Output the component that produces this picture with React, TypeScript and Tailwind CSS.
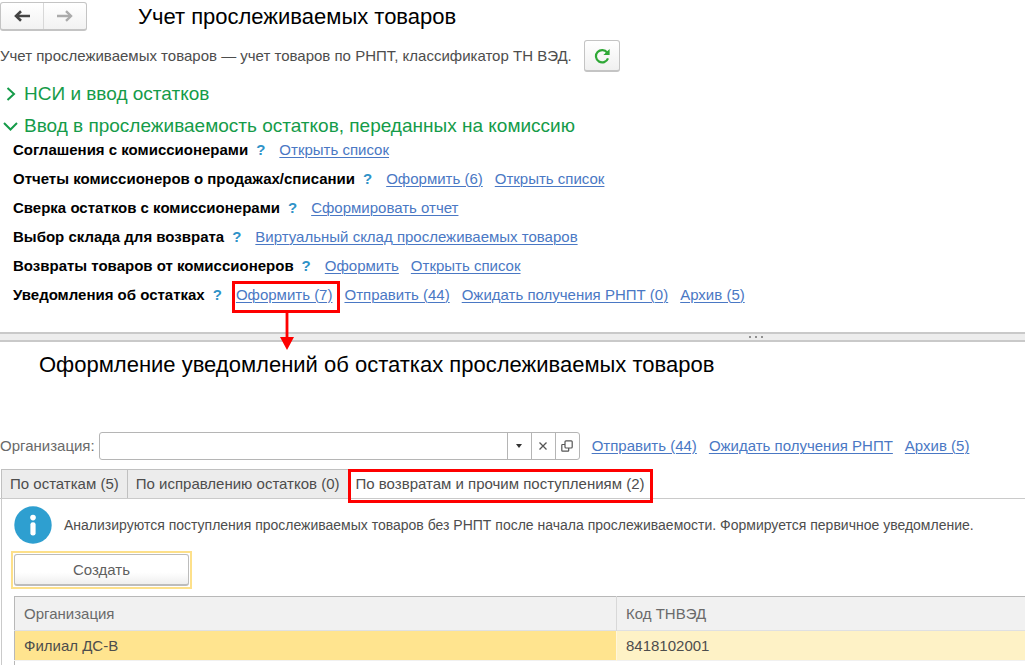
import { useState } from "react";

type LinkItem = { text: string; marked?: boolean };
type Row = { title: string; links: LinkItem[] };

const rows: Row[] = [
  { title: "Соглашения с комиссионерами", links: [{ text: "Открыть список" }] },
  {
    title: "Отчеты комиссионеров о продажах/списании",
    links: [{ text: "Оформить (6)" }, { text: "Открыть список" }],
  },
  { title: "Сверка остатков с комиссионерами", links: [{ text: "Сформировать отчет" }] },
  {
    title: "Выбор склада для возврата",
    links: [{ text: "Виртуальный склад прослеживаемых товаров" }],
  },
  {
    title: "Возвраты товаров от комиссионеров",
    links: [{ text: "Оформить" }, { text: "Открыть список" }],
  },
  {
    title: "Уведомления об остатках",
    links: [
      { text: "Оформить (7)", marked: true },
      { text: "Отправить (44)" },
      { text: "Ожидать получения РНПТ (0)" },
      { text: "Архив (5)" },
    ],
  },
];

const tabs = ["По остаткам (5)", "По исправлению остатков (0)", "По возвратам и прочим поступлениям (2)"];

function TextLink({ text }: { text: string }) {
  return (
    <a href="#" className="text-[#4a78c4] underline decoration-1 underline-offset-2">
      {text}
    </a>
  );
}

function MarkedLink({ text }: { text: string }) {
  return (
    <span className="relative">
      <TextLink text={text} />
      <span className="pointer-events-none absolute -left-1 -right-2 -top-1 h-8 border-3 border-[#fe0000]" />
      <svg className="pointer-events-none absolute left-11 top-7 h-[37px] w-3.5" viewBox="0 0 14 37" fill="#fe0000">
        <path d="M5.6 0h2.8v24H14L7 37 0 24h5.6z" />
      </svg>
    </span>
  );
}

function NavButtons() {
  return (
    <div className="flex h-[29px] w-[87px] overflow-hidden rounded-[3px] border border-b-2 border-[#c4c4c4] bg-linear-to-b from-white to-[#f2f2f2]">
      <button type="button" aria-label="Назад" className="flex flex-1 items-center justify-center border-r border-[#d8d8d8]">
        <svg className="h-3 w-4" viewBox="0 0 16 12" fill="none" stroke="#444" strokeWidth="2.6">
          <path d="M16 6H3" />
          <path d="M7 1.2 2 6l5 4.8" />
        </svg>
      </button>
      <button type="button" aria-label="Вперед" className="flex flex-1 items-center justify-center">
        <svg className="h-3 w-4" viewBox="0 0 16 12" fill="none" stroke="#ababab" strokeWidth="2.4">
          <path d="M0 6h13" />
          <path d="m9 1.2 5 4.8-5 4.8" />
        </svg>
      </button>
    </div>
  );
}

export default function App() {
  const [active, setActive] = useState(2);
  const [org, setOrg] = useState("");

  return (
    <div className="min-h-screen overflow-x-hidden bg-white pr-0.5 font-['Liberation_Sans',Arial,sans-serif] text-[15px] leading-5 text-[#4d4d4d]">
      <section>
        <header className="flex items-center gap-[51px] pt-0.5">
          <NavButtons />
          <h1 className="text-[22px] leading-7 text-black">Учет прослеживаемых товаров</h1>
        </header>

        <div className="flex items-center gap-3 pt-[9px]">
          <p>Учет прослеживаемых товаров — учет товаров по РНПТ, классификатор ТН ВЭД.</p>
          <button
            type="button"
            aria-label="Обновить"
            className="flex h-8 w-9 items-center justify-center rounded-[3px] border border-b-2 border-[#c4c4c4] bg-linear-to-b from-white to-[#f0f0f0]"
          >
            <svg className="h-4 w-4" viewBox="0 0 16 16" fill="none" stroke="#2fa836" strokeWidth="2.2">
              <path d="M13.2 4.6A6.2 6.2 0 1 0 14 10.4" />
              <path d="M15.6 1v6H9.4z" fill="#2fa836" stroke="none" />
            </svg>
          </button>
        </div>

        <h2 className="mt-1.5 text-[19px] leading-8 text-[#159b49]">
          <button type="button" className="flex items-center gap-1">
            <svg className="h-5 w-5" viewBox="0 0 20 20" fill="none" stroke="currentColor" strokeWidth="2">
              <path d="m7.5 4 6.5 6-6.5 6" />
            </svg>
            НСИ и ввод остатков
          </button>
        </h2>
        <h2 className="text-[19px] leading-8 text-[#159b49]">
          <button type="button" className="flex items-center gap-1">
            <svg className="h-5 w-5" viewBox="0 0 20 20" fill="none" stroke="currentColor" strokeWidth="2">
              <path d="m4 7 6.5 6.5L17 7" />
            </svg>
            Ввод в прослеживаемость остатков, переданных на комиссию
          </button>
        </h2>

        <ul className="-mt-[7px] pl-[13px]">
          {rows.map((row) => (
            <li key={row.title} className="flex h-[29px] items-center gap-3.5 whitespace-nowrap">
              <span className="flex gap-2">
                <span className="font-bold text-black">{row.title}</span>
                <button type="button" aria-label="Справка" className="font-bold text-[#2f93c8]">
                  ?
                </button>
              </span>
              <span className="flex gap-3">
                {row.links.map((link) =>
                  link.marked ? (
                    <MarkedLink key={link.text} text={link.text} />
                  ) : (
                    <TextLink key={link.text} text={link.text} />
                  ),
                )}
              </span>
            </li>
          ))}
        </ul>
      </section>

      <div className="mt-[23px] flex h-2.5 items-center justify-end border-y-2 border-[#c9c9c9] bg-[#ededed] pr-[25.6%]">
        <span className="flex gap-1">
          <i className="h-0.5 w-0.5 bg-[#909090]" />
          <i className="h-0.5 w-0.5 bg-[#909090]" />
          <i className="h-0.5 w-0.5 bg-[#909090]" />
        </span>
      </div>

      <section>
        <h1 className="pl-[39px] pt-[7px] text-[22px] leading-8 text-black">
          Оформление уведомлений об остатках прослеживаемых товаров
        </h1>

        <div className="mt-[51px] flex items-center whitespace-nowrap">
          <label htmlFor="org" className="pr-1 text-[#6a6a6a]">
            Организация:
          </label>
          <div className="flex h-7 w-[481px] rounded-[3px] border border-[#b5b5b5]">
            <input
              id="org"
              value={org}
              onChange={(e) => setOrg(e.target.value)}
              className="min-w-0 flex-1 px-2 outline-none"
            />
            <button type="button" aria-label="Выбрать" className="flex w-6 items-center justify-center border-l border-[#b5b5b5]">
              <svg className="h-1 w-1.5" viewBox="0 0 6 4" fill="#333">
                <path d="M0 0h6L3 4z" />
              </svg>
            </button>
            <button
              type="button"
              aria-label="Очистить"
              onClick={() => setOrg("")}
              className="flex w-6 items-center justify-center border-l border-[#b5b5b5]"
            >
              <svg className="h-2 w-2" viewBox="0 0 8 8" stroke="#555" strokeWidth="1.3">
                <path d="m.5.5 7 7m0-7-7 7" />
              </svg>
            </button>
            <button type="button" aria-label="Открыть" className="flex w-6 items-center justify-center border-l border-[#b5b5b5]">
              <svg className="h-3 w-3" viewBox="0 0 12 12" fill="none" stroke="#555" strokeWidth="1.2">
                <rect x="4" y=".8" width="7.2" height="7.2" rx="1" />
                <path d="M4 4.5H1.5q-.7 0-.7.7v5.3q0 .7.7.7H7q.7 0 .7-.7V8" />
              </svg>
            </button>
          </div>
          <nav className="flex gap-3 pl-3">
            <TextLink text="Отправить (44)" />
            <TextLink text="Ожидать получения РНПТ" />
            <TextLink text="Архив (5)" />
          </nav>
        </div>

        <div role="tablist" className="mt-[9px] flex h-[30px] whitespace-nowrap border-b border-[#cacaca] pl-px">
          {tabs.map((tab, i) => (
            <button
              key={tab}
              type="button"
              role="tab"
              aria-selected={active === i}
              onClick={() => setActive(i)}
              className={
                i === active
                  ? "relative px-2"
                  : "border-l border-t border-[#c0c0c0] bg-[#ececec] px-2"
              }
            >
              {tab}
              {i === 2 && (
                <span className="pointer-events-none absolute inset-x-0 top-0 h-[34px] border-3 border-[#fe0000]" />
              )}
            </button>
          ))}
        </div>

        <div className="ml-px border-l border-[#cacaca] pl-3">
          <div className="flex items-center gap-3 pt-[7px]">
            <svg className="size-[38px] shrink-0" viewBox="0 0 38 38" fill="#2e9fd0">
              <circle cx="19" cy="19" r="18.7" />
              <circle cx="19" cy="11.6" r="2.8" fill="#fff" />
              <rect x="16.4" y="16.2" width="5.2" height="13.4" rx="2.4" fill="#fff" />
            </svg>
            <p className="text-sm">
              Анализируются поступления прослеживаемых товаров без РНПТ после начала прослеживаемости. Формируется первичное
              уведомление.
            </p>
          </div>

          <div className="-ml-[3px] mt-[7px] w-[181px] border-2 border-[#fde08a] p-px">
            <button
              type="button"
              className="h-8 w-full rounded-[3px] border border-b-2 border-[#bcbcbc] bg-linear-to-b from-white from-60% to-[#efefef] text-[#5f5f5f]"
            >
              Создать
            </button>
          </div>

          <table className="mt-[7px] w-full table-fixed border-collapse border-l border-[#b8b8b8] text-left">
            <thead>
              <tr className="h-[34px] border-y border-b-[#dfe0e3] border-t-[#b8b8b8] bg-[#f1f1f1] text-[#6a6a6a]">
                <th className="w-[602px] border-r border-[#d8d8d8] pl-[9px] font-normal">Организация</th>
                <th className="pl-[9px] font-normal">Код ТНВЭД</th>
              </tr>
            </thead>
            <tbody>
              <tr className="h-[30px]">
                <td className="border-r border-[#fff6dc] bg-[#ffe48f] pl-[9px]">Филиал ДС-В</td>
                <td className="bg-[#fef2c6] pl-[9px]">8418102001</td>
              </tr>
              <tr className="h-1">
                <td colSpan={2} className="border-t border-[#f1f1f1]" />
              </tr>
            </tbody>
          </table>
        </div>
      </section>
    </div>
  );
}
